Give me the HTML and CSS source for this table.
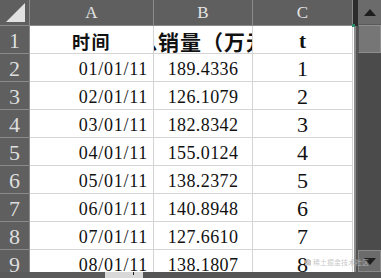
FILE: index.html
```html
<!DOCTYPE html>
<html lang="zh">
<head>
<meta charset="utf-8">
<link rel="stylesheet" href="styles.css">
</head>
<body>
<div class="app">
  <div class="main">
    <div class="sheet">
      <div class="hd corner"><svg width="29" height="25" viewBox="0 0 29 25"><polygon points="25,3 25,22 6,22" fill="#e2e2e2"/></svg></div>
      <div class="hd col">A</div>
      <div class="hd col">B</div>
      <div class="hd col">C</div>

      <div class="hd row">1</div>
      <div class="c title">时间</div>
      <div class="c title clip"><span class="ov">总销量（万元）</span></div>
      <div class="c title t">t</div>

      <div class="hd row">2</div><div class="c date">01/01/11</div><div class="c num">189.4336</div><div class="c idx">1</div>
      <div class="hd row">3</div><div class="c date">02/01/11</div><div class="c num">126.1079</div><div class="c idx">2</div>
      <div class="hd row">4</div><div class="c date">03/01/11</div><div class="c num">182.8342</div><div class="c idx">3</div>
      <div class="hd row">5</div><div class="c date">04/01/11</div><div class="c num">155.0124</div><div class="c idx">4</div>
      <div class="hd row">6</div><div class="c date">05/01/11</div><div class="c num">138.2372</div><div class="c idx">5</div>
      <div class="hd row">7</div><div class="c date">06/01/11</div><div class="c num">140.8948</div><div class="c idx">6</div>
      <div class="hd row">8</div><div class="c date">07/01/11</div><div class="c num">127.6610</div><div class="c idx">7</div>
      <div class="hd row">9</div><div class="c date">08/01/11</div><div class="c num">138.1807</div><div class="c idx">8</div>
    </div>
    <div class="gap"><div class="gap-top"></div><div class="gap-body"></div></div>
    <div class="vscroll">
      <div class="btn up"><svg width="12" height="7" viewBox="0 0 12 7"><polygon points="6,0 12,7 0,7" fill="#1e1e1e"/></svg></div>
      <div class="thumb"></div>
      <div class="track"></div>
      <div class="btn down"><svg width="12" height="7" viewBox="0 0 12 7"><polygon points="0,0 12,0 6,7" fill="#1e1e1e"/></svg></div>
    </div>
  </div>
  <div class="hbar"><div class="hseg dark1"></div><div class="hseg light"><span class="tick"></span></div><div class="hseg dark2"></div></div>
  <div class="handle"></div>
  <div class="watermark"><span class="wm-logo"></span>稀土掘金技术社区</div>
</div>
</body>
</html>
```

FILE: styles.css
```css
* { box-sizing: border-box; }
html, body { margin: 0; padding: 0; }
body { background: #4f4f4f; width: 381px; height: 278px; overflow: hidden; }
.app { position: relative; width: 381px; height: 278px; }
.main { display: flex; height: 272px; }
.sheet {
  display: grid;
  grid-template-columns: 30px 124px 99px 100px;
  grid-template-rows: 26px repeat(9, 28px);
  height: 272px;
  overflow: hidden;
  background: #ffffff;
}
.hd {
  background: #5f5f5f;
  color: #e4e4e4;
  border-right: 1px solid #8a8a8a;
  border-bottom: 1px solid #8a8a8a;
  font-family: "Liberation Serif", serif;
  display: flex;
  align-items: center;
  justify-content: center;
}
.corner { padding: 0; align-items: flex-start; justify-content: flex-start; }
.corner svg { display: block; }
.col { font-size: 17px; padding-top: 1px; }
.row { font-size: 22px; padding-top: 3px; color: #dedede; }
.c {
  border-right: 1px solid #d4d4d4;
  border-bottom: 1px solid #d4d4d4;
  display: flex;
  align-items: center;
  color: #111;
  font-family: "Liberation Serif", serif;
  white-space: nowrap;
}
.title {
  justify-content: center;
  font-family: "Noto Sans CJK SC", sans-serif;
  font-weight: 700;
  font-size: 18px;
  letter-spacing: 1.5px;
  padding-top: 3px;
}
.clip { overflow: hidden; padding-left: 20px; font-size: 21px; letter-spacing: 1px; }
.ov { flex: none; }
.t { font-family: "Liberation Serif", serif; font-size: 21px; letter-spacing: 0; padding-top: 4px; }
.date { justify-content: flex-end; padding-right: 5px; font-size: 18px; letter-spacing: 0.75px; padding-top: 4px; }
.num { justify-content: center; font-size: 18px; letter-spacing: 0.4px; padding-top: 4px; }
.idx { justify-content: center; font-size: 22px; padding-top: 3px; }
.gap { width: 5px; display: flex; flex-direction: column; }
.gap-top { height: 26px; background: #2c2c2c; }
.gap-body { flex: 1; background: linear-gradient(to right, #ffffff 0 1px, #8c8c8c 1px 3px, #555555 3px 5px); }
.vscroll { width: 23px; display: flex; flex-direction: column; background: #4b4b4b; }
.btn { height: 25px; background: #6b6b6b; display: flex; align-items: center; justify-content: center; }
.btn.up { border-bottom: 1px solid #5a5a5a; }
.thumb { height: 28px; background: #767676; border: 1px solid #8e8e8e; border-left: 1px solid #555; }
.track { flex: 1; }
.btn.down { height: 22px; border: 1px solid #8a8a8a; }
.hbar { display: flex; height: 6px; }
.hseg.dark1 { width: 105px; background: #5a5a5a; }
.hseg.light { width: 38px; background: #d8d8d8; position: relative; }
.tick { position: absolute; left: 28px; top: 0; width: 1px; height: 3px; background: #222; }
.hseg.dark2 { flex: 1; background: #555555; }
.handle { position: absolute; left: 352px; top: 24px; width: 3px; height: 3px; background: #2e8b6a; }
.watermark {
  position: absolute;
  left: 305px;
  top: 257px;
  display: flex;
  align-items: center;
  gap: 2px;
  font-family: "Noto Sans CJK SC", sans-serif;
  font-size: 7px;
  color: rgba(190, 190, 190, 0.85);
  white-space: nowrap;
}
.wm-logo { width: 6px; height: 7px; background: rgba(190, 190, 190, 0.8); clip-path: polygon(50% 0, 100% 30%, 100% 100%, 0 100%, 0 30%); }
```
